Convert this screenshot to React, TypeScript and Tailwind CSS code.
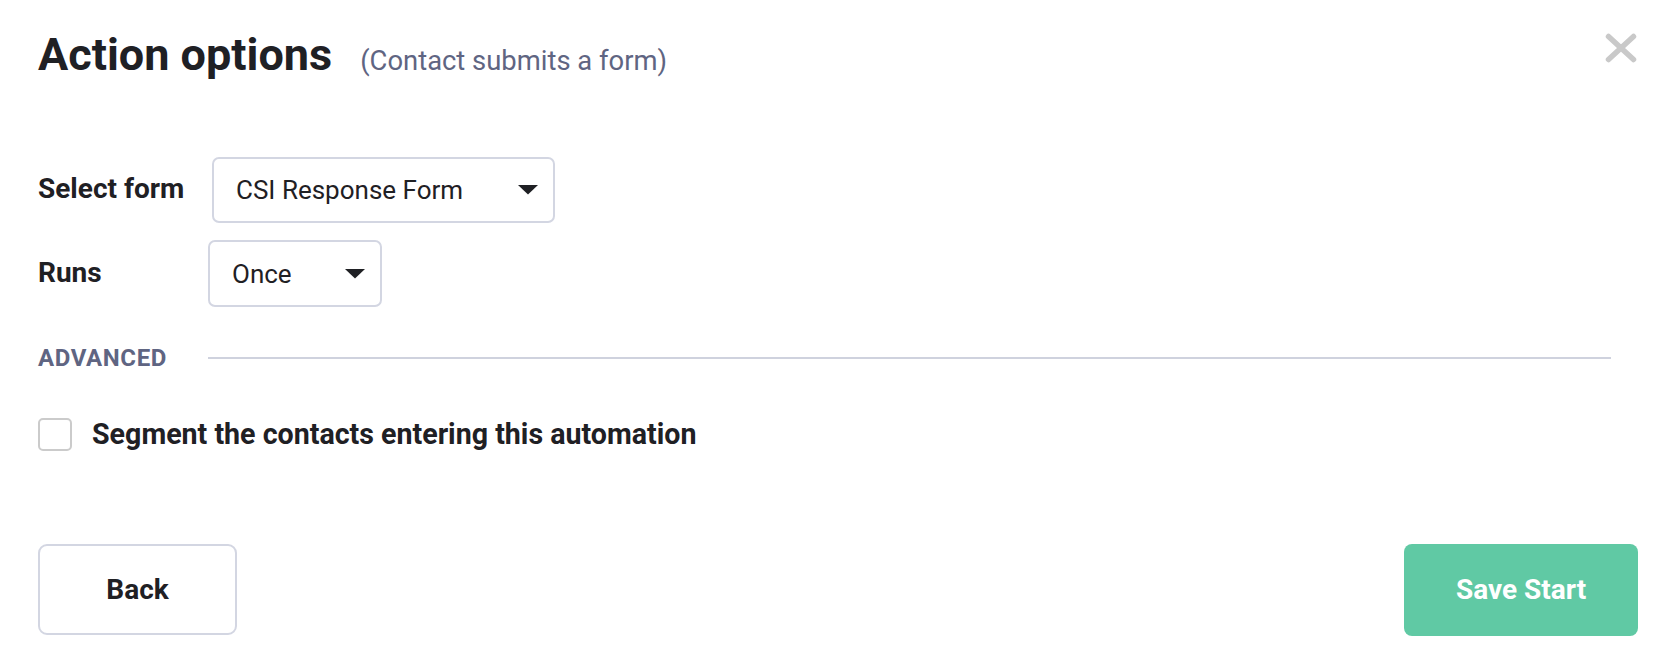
import React from 'react';

const font = { fontFamily: 'Roboto, "Liberation Sans", sans-serif' };

function Caret() {
  return (
    <svg width="20" height="10" viewBox="0 0 20 10" className="shrink-0">
      <polygon points="0,0 20,0 10,9.5" fill="#1f2024" />
    </svg>
  );
}

function SelectBox({ value, className }: { value: string; className: string }) {
  return (
    <div
      className={`flex items-center justify-between rounded-[7px] border-2 border-[#d3d6e2] bg-white pl-[22px] pr-[15px] ${className}`}
    >
      <span className="text-[26px] leading-none text-[#1f2024]">{value}</span>
      <Caret />
    </div>
  );
}

export default function App() {
  return (
    <div className="min-h-screen bg-white pl-[38px] pr-[36px]" style={font}>
      {/* header */}
      <div className="flex items-start justify-between pt-[33px]">
        <div className="flex items-baseline gap-[28px]">
          <h1 className="text-[45px] font-bold leading-[44px] text-[#1f2024]">Action options</h1>
          <span className="text-[27.4px] leading-none text-[#5f6582]">(Contact submits a form)</span>
        </div>
        <button className="mr-[1px]">
          <svg width="32" height="30" viewBox="0 0 32 30">
            <path d="M3.5 3.5 L28.5 26.5 M28.5 3.5 L3.5 26.5" stroke="#c9c9c9" strokeWidth="5.5" strokeLinecap="round" fill="none" />
          </svg>
        </button>
      </div>

      {/* form rows */}
      <div className="mt-[80px] flex items-center">
        <label className="w-[174px] pb-[3px] text-[28px] font-bold leading-tight text-[#1f2024]">Select form</label>
        <SelectBox value="CSI Response Form" className="h-[66px] w-[343px]" />
      </div>
      <div className="mt-[17px] flex items-center">
        <label className="w-[170px] pb-[3px] text-[28px] font-bold leading-tight text-[#1f2024]">Runs</label>
        <SelectBox value="Once" className="h-[67px] w-[174px]" />
      </div>

      {/* advanced */}
      <div className="mt-[39px] flex items-center gap-[41px] pr-[27px]">
        <span className="text-[24px] font-bold leading-[24px] tracking-[0.6px] text-[#5f6582]">ADVANCED</span>
        <div className="h-[2px] flex-1 bg-[#cfd2de]" />
      </div>

      <div className="mt-[47px] flex items-center gap-[20px]">
        <div className="h-[33px] w-[34px] rounded-[5px] border-2 border-[#cbcbcb] bg-white" />
        <span className="text-[28.6px] font-bold leading-tight text-[#1f2024]">Segment the contacts entering this automation</span>
      </div>

      {/* footer */}
      <div className="mt-[91px] flex items-center justify-between">
        <button className="flex h-[91px] w-[199px] items-center justify-center rounded-[9px] border-2 border-[#d3d6e2] bg-white text-[28px] font-bold text-[#1f2024]">
          Back
        </button>
        <button className="flex h-[92px] w-[234px] items-center justify-center rounded-[8px] bg-[#60c9a4] text-[28px] font-bold text-white">
          Save Start
        </button>
      </div>
    </div>
  );
}
